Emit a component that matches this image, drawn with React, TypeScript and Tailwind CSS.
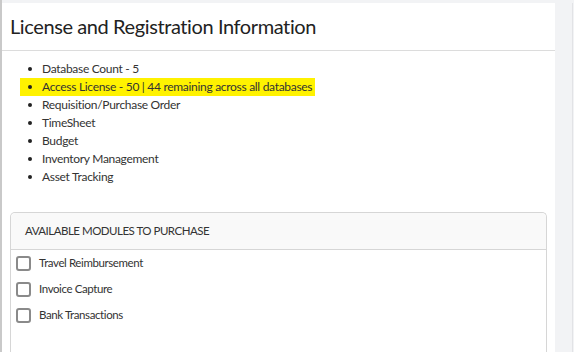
import React from "react";

// 라이선스 정보 패널
const ITEMS = [
  "Database Count - 5",
  "Access License - 50 | 44 remaining across all databases",
  "Requisition/Purchase Order",
  "TimeSheet",
  "Budget",
  "Inventory Management",
  "Asset Tracking",
];

const MODULES = ["Travel Reimbursement", "Invoice Capture", "Bank Transactions"];

export default function App() {
  return (
    <div
      className="w-[574px] h-[352px] overflow-hidden flex bg-[#f2f3f5] text-[#333]"
      style={{ fontFamily: "Lato, 'Open Sans', sans-serif" }}
    >
      <div className="w-[2px] shrink-0 bg-[#c9c9c9]" />
      <div className="flex-1 flex flex-col">
        <div className="h-[3px] shrink-0" />
        <div className="flex-1 flex">
          {/* 흰 패널 */}
          <div className="w-[553px] bg-white flex flex-col">
            <div className="h-[48px] border-b border-[#dcdcdc] flex items-start pt-[8px] px-2">
              <h1 className="text-[20px] text-[#222] tracking-[-0.4px]">License and Registration Information</h1>
            </div>
            <ul className="mt-[9px] pl-[18px] text-[12px] leading-[18px] tracking-[-0.3px]">
              {ITEMS.map((t, i) => (
                <li key={t} className="flex items-center">
                  <span
                    className={`flex items-center ${i === 1 ? "bg-[#fff200]" : ""} pl-[8px] pr-[3px]`}
                  >
                    <span className="w-[4px] h-[4px] rounded-full bg-[#222] mr-[10px]" />
                    {t}
                  </span>
                </li>
              ))}
            </ul>
            {/* 구매 가능 모듈 */}
            <div className="mt-[26px] ml-[8px] w-[537px] flex-1 border border-[#d6d6d6] rounded-t-[5px] border-b-0 flex flex-col">
              <div className="h-[37px] bg-[#f9f9f9] border-b border-[#d6d6d6] rounded-t-[5px] flex items-center px-[14px] text-[11.5px] tracking-[-0.5px] uppercase text-[#333]">
                Available Modules to Purchase
              </div>
              <div className="pl-[5px] text-[11.5px] tracking-[-0.4px]">
                {MODULES.map((m) => (
                  <div key={m} className="h-[26px] flex items-center">
                    <span className="w-[15px] h-[15px] border-2 border-[#8a8a8a] rounded-[3px] mr-[8px]" />
                    {m}
                  </div>
                ))}
              </div>
            </div>
          </div>
          <div className="flex-1" />
          <div className="w-[1px] bg-[#e2e3e6]" />
          <div className="w-[1px]" />
        </div>
      </div>
    </div>
  );
}
